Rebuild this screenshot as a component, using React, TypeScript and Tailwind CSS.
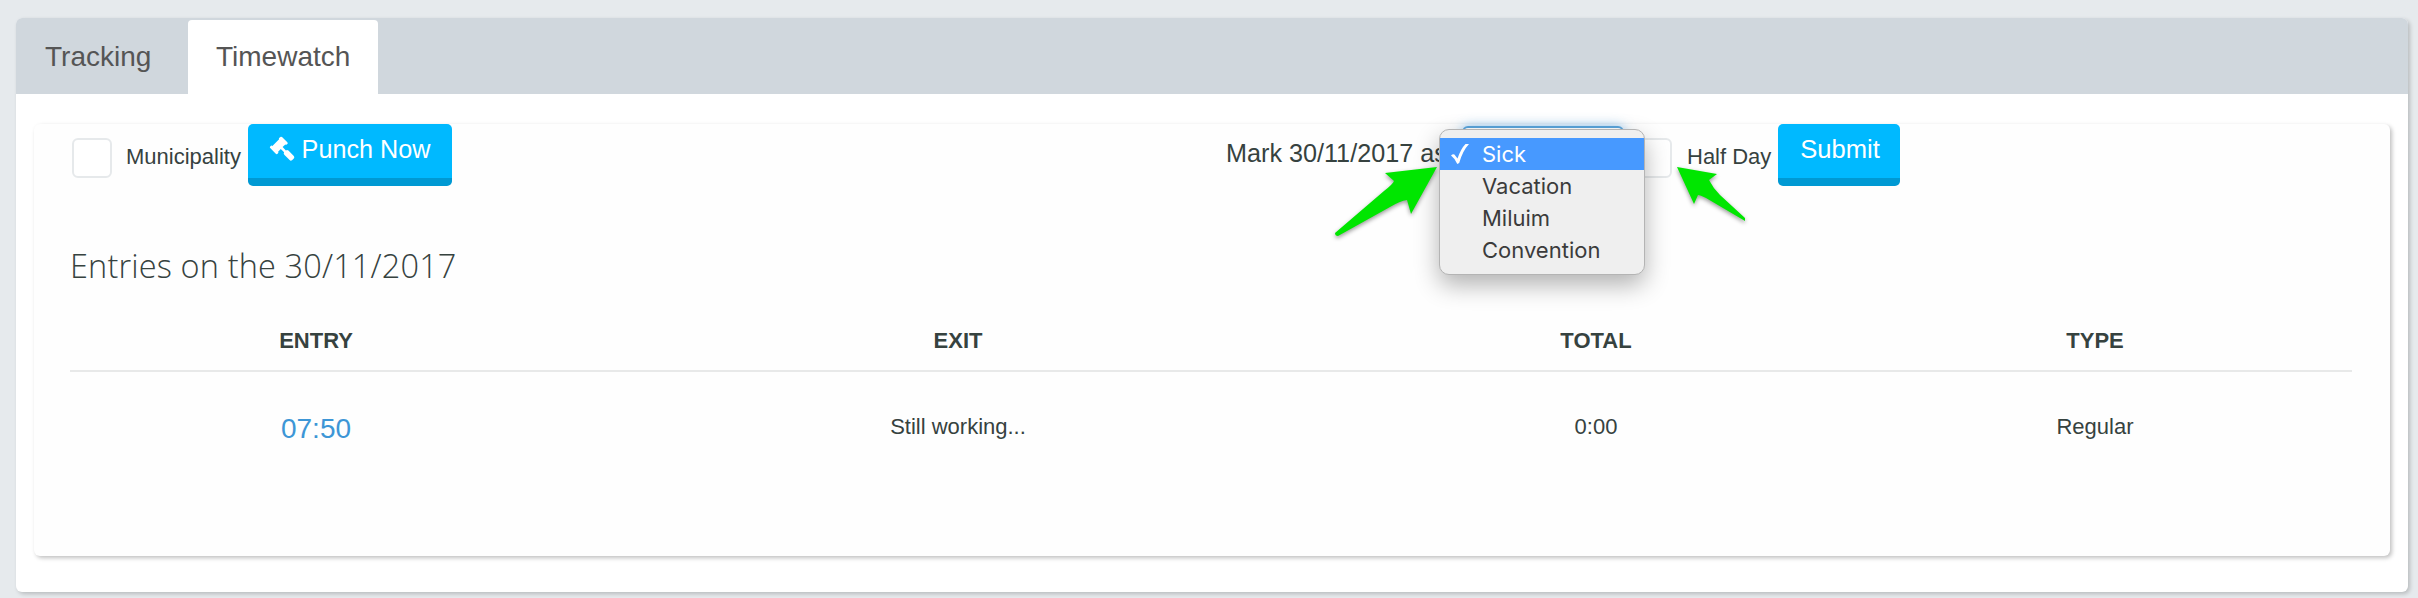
import React from "react";

const options = ["Sick", "Vacation", "Miluim", "Convention"];

function CheckBox() {
  return <span className="mt-[14px] h-10 w-10 shrink-0 rounded-md border-2 border-[#e6e9eb] bg-white" />;
}

function ActionButton({ children, className }: { children: React.ReactNode; className: string }) {
  return (
    <button
      className={`flex h-[62px] shrink-0 items-center justify-center rounded-[5px] border-b-8 border-[#0099d3] bg-[#00b9ff] leading-[30px] text-white ${className}`}
    >
      {children}
    </button>
  );
}

function Gavel() {
  return (
    <svg viewBox="0 0 28 28" className="mr-[6px] h-7 w-7" fill="currentColor">
      <path d="M12.300 1.300Q13.100 1 13.800 1.700L18.800 6.700Q19.500 7.400 19.100 8.200L18.200 9.100Q17.500 9.500 16.800 8.900L14.100 11.600 17.400 14.900Q18.700 14 19.900 15.100L25.300 20.500Q26.400 21.700 25.300 22.900L23.500 24.700Q22.300 25.700 21.100 24.600L15.800 19.300Q14.700 18.100 15.600 16.800L12.300 13.500 9.600 16.200Q10.200 16.900 9.700 17.600L8.800 18.500Q8 18.900 7.300 18.300L1.700 12.600Q1.100 11.900 1.500 11.200L2.500 10.200Q3.200 9.800 3.900 10.400L10.600 3.700Q10.100 3 10.600 2.400Z" transform="translate(0.500 0.500)" />
    </svg>
  );
}

function StatusSelect() {
  return (
    <div className="relative mt-[2px] h-14 w-[162px] shrink-0 rounded-md border-2 border-[#5aa5dc] bg-white shadow-[0_0_12px_rgba(82,168,236,0.6)]">
      <ul className="absolute -left-[25px] top-[1px] z-10 h-[146px] w-[206px] rounded-[10px] border border-[#b4b4b4] bg-[#efefef] pt-[8px] font-[Inter,sans-serif] text-[22px] leading-8 text-[#3b3b3b] shadow-[0_10px_24px_rgba(0,0,0,0.3)]">
        {options.map((label, index) => (
          <li
            key={label}
            className={`flex h-8 items-center pl-[42px] ${index === 0 ? "relative bg-[#4799ff] text-white" : ""}`}
          >
            {index === 0 && (
              <svg viewBox="0 0 18 20" className="absolute left-[11px] top-[6px] h-5 w-[18px]" fill="currentColor">
                <path d="M0 11.500Q2 9.500 3.400 10.500L6.500 14.500Q10 4.500 14.500 0H18Q11.500 7 8.200 19L6.300 20Q4.500 15 0 11.500Z" />
              </svg>
            )}
            {label}
          </li>
        ))}
      </ul>
    </div>
  );
}

export default function App() {
  return (
    <div className="h-[598px] w-[2418px] overflow-hidden bg-[#e6eaed] pl-4 pt-[18px] font-['Liberation_Sans',Arial,sans-serif] text-[22px] text-[#36423f]">
      <main className="h-[574px] w-[2392px] rounded-md bg-white shadow-[2px_2px_4px_rgba(0,0,0,0.2)]">
        <nav className="flex h-[76px] rounded-t-md bg-[#d0d7dd] text-[28px] leading-8 text-[#555]">
          <a className="w-[172px] pl-[29px] pt-[23px]">Tracking</a>
          <a className="mt-[2px] w-[190px] rounded-t bg-white pl-7 pt-[21px]">Timewatch</a>
        </nav>

        <section className="ml-[18px] mt-[30px] h-[432px] w-[2356px] rounded-md bg-[#fefefe] shadow-[2px_2px_4px_rgba(0,0,0,0.25)]">
          <div className="flex h-[62px] pl-[38px]">
            <div className="flex w-[1154px]">
              <CheckBox />
              <label className="ml-[14px] mt-5 w-[122px] leading-[26px]">Municipality</label>
              <ActionButton className="w-[204px] pb-[4px] pr-[2px] text-[25.2px]">
                <Gavel />
                Punch Now
              </ActionButton>
            </div>
            <div className="relative flex">
              <span className="mt-[14px] w-[236px] whitespace-nowrap text-[25.2px] leading-[30px]">Mark 30/11/2017 as</span>
              <StatusSelect />
              <div className="ml-[8px] flex">
                <CheckBox />
                <label className="ml-[15px] mt-5 w-[91px] leading-[26px]">Half Day</label>
                <ActionButton className="w-[122px] pb-[4px] pl-[2px] text-[25.6px]">Submit</ActionButton>
              </div>
              <svg
                viewBox="0 0 420 90"
                className="pointer-events-none absolute left-[104px] top-[36px] z-20 h-[90px] w-[420px] drop-shadow-[0_2px_2px_rgba(0,0,0,0.4)]"
                fill="#00e600"
              >
                <path d="M107 7 81 54 77 40Q70 41 60 47L8 76Q5 76 5 73L54 31Q63 24 64 21L55 13Z" />
                <path d="M347 7 387 14 379 20Q383 28 390 35L415 58V61L376 38Q370 35 368 35L364 44Z" />
              </svg>
            </div>
          </div>

          <h2 className="ml-[36px] mt-[57px] font-['Open_Sans',sans-serif] text-[32.5px] font-light leading-[46px] tracking-[0.14px]">
            Entries on the 30/11/2017
          </h2>

          <table className="ml-[36px] mt-[26px] w-[2282px] table-fixed border-collapse text-center">
            <colgroup>
              <col className="w-[492px]" />
              <col className="w-[792px]" />
              <col className="w-[484px]" />
              <col className="w-[514px]" />
            </colgroup>
            <thead>
              <tr className="h-14 border-b-2 border-[#e8e9e9]">
                <th className="pb-[5px]">ENTRY</th>
                <th className="pb-[5px]">EXIT</th>
                <th className="pb-[5px]">TOTAL</th>
                <th className="pb-[5px]">TYPE</th>
              </tr>
            </thead>
            <tbody>
              <tr className="h-[114px]">
                <td className="text-[28px] text-[#3d96d6]">07:50</td>
                <td className="pb-1">Still working...</td>
                <td className="pb-1">0:00</td>
                <td className="pb-1">Regular</td>
              </tr>
            </tbody>
          </table>
        </section>
      </main>
    </div>
  );
}
